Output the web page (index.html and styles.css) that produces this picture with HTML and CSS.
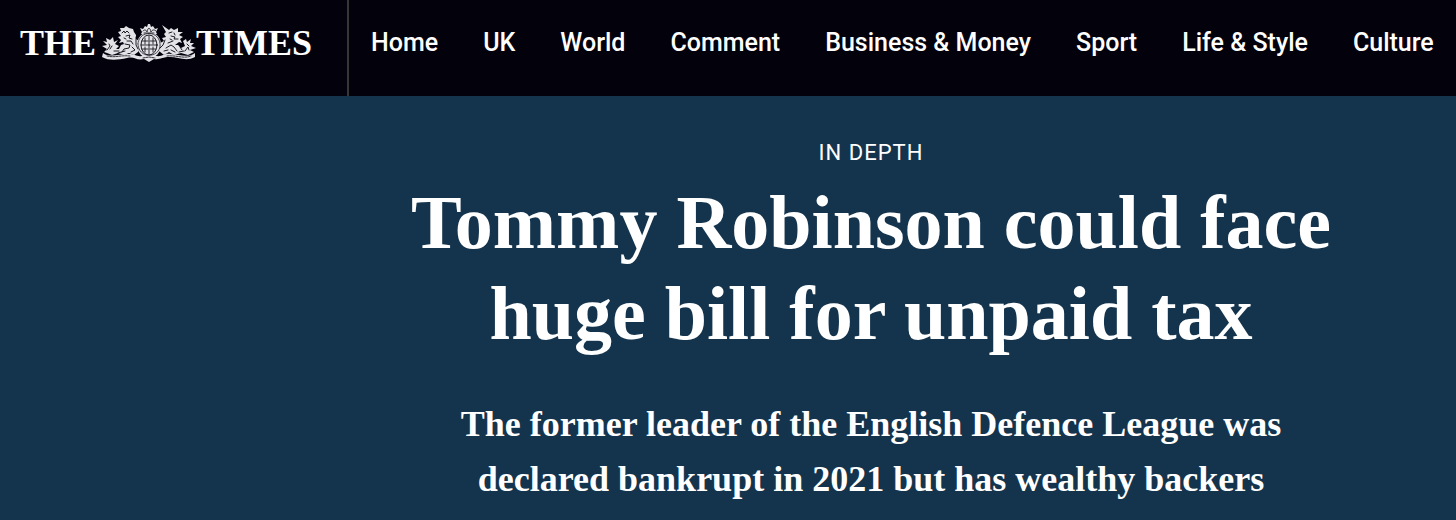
FILE: index.html
```html
<!DOCTYPE html>
<html lang="en">
<head>
<meta charset="utf-8">
<meta name="viewport" content="width=device-width, initial-scale=1">
<title>Tommy Robinson could face huge bill for unpaid tax</title>
<link rel="stylesheet" href="styles.css">
</head>
<body>
<header class="masthead">
  <a class="brand" href="#">
    <span>THE</span>
    <svg class="crest" viewBox="0 0 94 38" fill="none" stroke-linecap="round" stroke-linejoin="round" aria-hidden="true">
      <g fill="#e2e2e7">
        <path d="M2 28 5 25 0 22 5 21 1 17 5 18 4 14 8 16 11 13 12 18 16 16 13 20 17 22 14 25 17 25 19 21 22 20 21 18 17 19 19 16 16 13 19 12 16 8 19 7 18 4 22 4 24 2 27 4 31 5 32 8 34 11 34 15 37 17 35 20 37 24 36 28 32 31 27 29 22 31 16 29 10 31 5 29Z"/>
        <path d="M92 28 88 26 94 24 89 22 92 19 88 19 89 15 85 18 84 15 81 17 83 22 79 24 76 21 73 21 77 18 80 19 78 15 81 13 77 11 81 8 76 8 76 4 72 6 69 4 67 6 60 1 64 8 62 10 64 13 60 14 62 17 58 19 59 23 57 27 62 31 67 28 72 31 79 29 86 31Z"/>
        <path d="M1 29C7 34 17 30 26 30 34 30 34 33 40 32 45 31 49 31 54 32 61 33 62 29 69 30 78 31 87 34 93 29L93 33C84 38 76 33 68 33 60 33 58 36 52 35L47 38 42 35C34 37 33 32 25 34 16 36 7 37 0 33Z"/>
        <ellipse cx="47" cy="21" rx="12" ry="13"/>
        <path d="M40 8 38 4 41 5 43 2 45 3 46 0H48L49 3 51 2 53 5 56 4 54 8 55 10H39Z"/>
      </g>
      <g stroke="#05050e" stroke-width=".9">
        <ellipse cx="47" cy="21" rx="8" ry="10"/>
        <path stroke-width=".8" stroke-dasharray="1 1" d="M36 20C37 6 57 6 58 20 59 34 37 36 36 20Z"/>
        <path d="M47 12V30M39 21H55M43 14V20M43 23V28M51 14V20M51 23V28M40 17H46M48 17H54M40 25H46M48 25H54" stroke-width=".8"/>
        <path d="M41 7C43 5 44 6 45 8 46 3 48 3 49 8 50 6 52 5 54 7M42 9H52" stroke-width=".8"/>
        <path d="M20 9 22 7 23 9 25 7 27 9M24 12 28 11 27 14 30 15M25 17 29 17 31 20M23 20 28 21 27 24 22 25 20 28M30 23 33 26 29 28M12 27 17 27M5 26 8 22 7 20M10 22 8 25M22 14 24 15M16 29 23 27M34 13 34 21 36 25"/>
        <path d="M67 9 70 8M72 9 73 11M69 12 73 13 72 15 76 15M66 19 71 17M64 24 69 21 72 23 75 27M62 27 66 26M69 26 73 28M77 28 82 27M83 27 86 23 87 26M68 15 70 16M78 23 80 26M63 16 61 21 58 24M85 20 87 22"/>
        <path d="M5 32C13 34 18 31 28 32M65 32C75 31 81 35 89 32M41 34 47 33 53 34" stroke-width=".8" stroke-dasharray="2 1"/>
      </g>
    </svg>
    <span>TIMES</span>
  </a>
  <nav class="sections" aria-label="Sections">
    <a href="#">Home</a>
    <a href="#">UK</a>
    <a href="#">World</a>
    <a href="#">Comment</a>
    <a href="#">Business &amp; Money</a>
    <a href="#">Sport</a>
    <a href="#">Life &amp; Style</a>
    <a href="#">Culture</a>
  </nav>
</header>
<main class="article">
  <p class="label">IN DEPTH</p>
  <h1 class="headline">Tommy Robinson could face huge bill for unpaid tax</h1>
  <p class="standfirst">The former leader of the English Defence League was declared bankrupt in 2021 but has wealthy backers</p>
</main>
</body>
</html>
```
FILE: styles.css
```css
* {
  box-sizing: border-box;
}

body {
  margin: 0;
  min-height: 100vh;
  background: #14344d;
  color: #fff;
}

a {
  color: inherit;
  text-decoration: none;
}

.masthead {
  display: flex;
  background: #02010c;
  white-space: nowrap;
}

.brand {
  display: flex;
  flex: none;
  align-items: center;
  padding: 21px 35px 31px 20px;
  border-right: 2px solid #363636;
  font: bold 36px/44px "Liberation Serif", "Times New Roman", serif;
}

.crest {
  width: 94px;
  height: 38px;
  margin-left: 6px;
}

.sections {
  display: flex;
  gap: 45px;
  padding: 27px 18px 37px 22px;
  font: 500 25px/32px Roboto, sans-serif;
}

.article {
  padding: 41px 0 12px 286px;
  text-align: center;
}

.label {
  margin: 0;
  font: 400 22px/32px Roboto, sans-serif;
  letter-spacing: 1px;
}

.headline {
  max-width: 960px;
  margin: 8px auto 38px;
  font: bold 76px/91px "Liberation Serif", "Times New Roman", serif;
}

.standfirst {
  max-width: 850px;
  margin: 0 auto;
  font: bold 36px/55px "Liberation Serif", "Times New Roman", serif;
}
```
